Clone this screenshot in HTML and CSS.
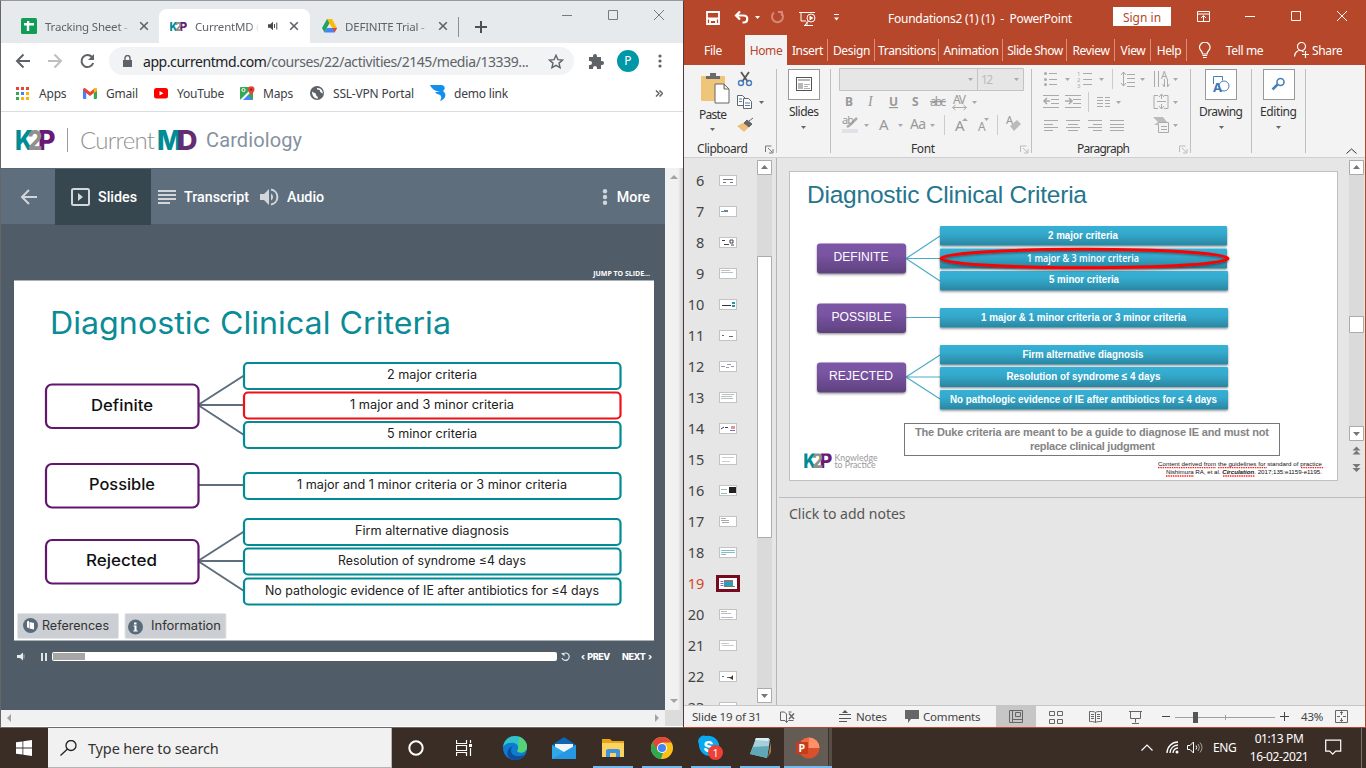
FILE: index.html
```html
<!DOCTYPE html>
<html lang="en">
<head>
<meta charset="utf-8">
<title>Desktop</title>
<link rel="stylesheet" href="styles.css">
</head>
<body>
<svg width="0" height="0" class="defs">
  <defs>
    <linearGradient id="teal" x1="0" y1="0" x2="0" y2="1"><stop offset="0" stop-color="#36b1d6"/><stop offset=".4" stop-color="#34a9cc"/><stop offset="1" stop-color="#2a86a1"/></linearGradient>
    <linearGradient id="purple" x1="0" y1="0" x2="0" y2="1"><stop offset="0" stop-color="#7d57a7"/><stop offset=".4" stop-color="#7853a1"/><stop offset="1" stop-color="#5d417d"/></linearGradient>
    <filter id="shade" x="-5%" y="-20%" width="110%" height="160%"><feDropShadow dx="0" dy="1.2" stdDeviation="1" flood-opacity=".45"/></filter>
    <symbol id="k2p" viewBox="0 0 39 20">
      <text x="-1" y="20" font-size="27.500" class="lg" fill="#008c95" textLength="18" lengthAdjust="spacingAndGlyphs">K</text>
      <text x="22" y="20" font-size="27.500" class="lg" fill="#6a1a74" textLength="17.500" lengthAdjust="spacingAndGlyphs">P</text>
      <text x="11.500" y="20" font-size="27.500" class="lg" fill="#8f9090" textLength="15" lengthAdjust="spacingAndGlyphs">2</text>
    </symbol>
    <symbol id="close" viewBox="0 0 10 10"><path d="M1.2 1.2l7.6 7.6M8.800 1.200L1.200 8.800" stroke="#5f6368" stroke-width="1.600" fill="none"/></symbol>
  </defs>
</svg>

<div class="desktop">
  <section class="chrome">
    <div class="tabstrip">
      <div class="tab t1">
        <svg width="16" height="16"><rect width="16" height="16" rx="1.500" fill="#0f9d58"/><path d="M3 5h10v2.400H8.200V13H5.800V7.400H3zM6 3h2.300v4H6z" fill="#fff"/></svg>
        <span class="tt">Tracking Sheet -</span>
        <svg class="x" width="10" height="10"><use href="#close"/></svg>
      </div>
      <div class="tab active t2">
        <svg width="17" height="9"><use href="#k2p" width="17" height="9"/></svg>
        <span class="tt">CurrentMD (</span>
        <svg class="snd" width="10" height="10"><path d="M0 3.200h2.200L5 .8v8.400L2.200 6.800H0z" fill="#45494d"/><path d="M6.500 3v4M8.800 1.500v7" stroke="#45494d"/></svg>
        <svg class="x" width="10" height="10"><use href="#close"/></svg>
      </div>
      <div class="tab t3">
        <svg width="15" height="14" viewBox="0 0 15 14"><path d="M5 0h5L5 8.700 2.500 13.500 0 9z" fill="#22a45d"/><path d="M5 0h5l5 9h-5z" fill="#fbbc05"/><path d="M4.800 9H15l-2.500 4.500h-10z" fill="#4285f4"/><path d="M12 9h3l-2.500 4.500L10.800 9z" fill="#ea4335"/><path d="M7.500 4.500L10 9H5z" fill="#e7eaed"/></svg>
        <span class="tt">DEFINITE Trial -</span>
        <svg class="x" width="10" height="10"><use href="#close"/></svg>
      </div>
      <svg class="plus" width="34" height="20"><path d="M2.500 0v20" stroke="#8d9093"/><path d="M25 4v12M19 10h12" stroke="#4d5155" stroke-width="2"/></svg>
      <svg class="winctl" width="104" height="12"><path d="M0 5.500h10M46.500 .5h9v9h-9zM92 0l10 10M102 0L92 10" fill="none" stroke="#777b7e"/></svg>
    </div>
    <div class="addr">
      <svg width="95" height="18" viewBox="0 0 95 18" fill="none" stroke="#5f6368" stroke-width="2"><path d="M15 9H3M8.500 2.500L2 9l6.500 6.500"/><path d="M33 9h12M39.500 2.500L46 9l-6.500 6.500" stroke="#bdbfc1"/><path d="M77 5a6 6 0 1 0 1.200 6"/><path d="M79 2v6h-6z" fill="#5f6368" stroke="none"/></svg>
      <div class="omni">
        <svg width="9" height="13"><path d="M0 5h9v7H0z" fill="#5f6368"/><path d="M2 6V3a2.500 2.500 0 0 1 5 0v3" fill="none" stroke="#5f6368" stroke-width="1.400"/></svg>
        <span><b>app.currentmd.com</b>/courses/22/activities/2145/media/13339...</span>
        <svg class="star" width="16" height="15" viewBox="0 0 16 15"><path d="M8 1.300l1.900 4.300 4.700.4-3.600 3.100 1.100 4.600L8 11.300l-4.100 2.400L5 9.100 1.400 6l4.700-.4z" fill="none" stroke="#5f6368" stroke-width="1.400"/></svg>
      </div>
      <svg class="puz" width="15" height="15" viewBox="0 0 15 15"><path d="M0 3h4V2a2 2 0 0 1 4 0v1h4v4h1a2 2 0 0 1 0 4h-1v4H8v-1a2 2 0 0 0-4 0v1H0v-4h1a2 2 0 0 0 0-4H0z" fill="#5f6368"/></svg>
      <div class="avatar">P</div>
      <svg width="4" height="14" fill="#5f6368"><circle cx="2" cy="2" r="1.600"/><circle cx="2" cy="7" r="1.600"/><circle cx="2" cy="12" r="1.600"/></svg>
    </div>
    <div class="marks">
      <span class="m m1"><svg width="13" height="13"><g fill="#ea4335"><path d="M0 0h3v3H0zM5 0h3v3H5zM10 0h3v3h-3z"/></g><path d="M0 5h3v3H0zM0 10h3v3H0z" fill="#34a853"/><path d="M5 5h3v3H5z" fill="#4285f4"/><path d="M10 5h3v3h-3zM5 10h3v3H5zM10 10h3v3h-3z" fill="#fbb200"/></svg>Apps</span>
      <span class="m m2"><svg width="14" height="11"><path d="M0 1.500h3.200V11H1a1 1 0 0 1-1-1z" fill="#4285f4"/><path d="M10.800 1.500H14V10a1 1 0 0 1-1 1h-2.200z" fill="#34a853"/><path d="M0 1.500A1.500 1.500 0 0 1 2.500.4L7 4l4.500-3.600A1.500 1.500 0 0 1 14 1.500v1L7 8 0 2.500z" fill="#ea4335"/><path d="M10.800 1l.7-.6A1.500 1.500 0 0 1 14 1.500V3l-3.200 2z" fill="#fbbc04"/></svg>Gmail</span>
      <span class="m m3"><svg width="14" height="12"><rect y="1" width="14" height="10.500" rx="2.500" fill="#f00"/><path d="M5.500 4v4.500l4-2.200z" fill="#fff"/></svg>YouTube</span>
      <span class="m m4"><svg width="15" height="14"><rect y="1" width="13" height="13" rx="1" fill="#34a853"/><path d="M7 8l6 6H1z" fill="#4285f4"/><path d="M0 14L12 2l1 2L3 14z" fill="#f5f5f5"/><circle cx="3.500" cy="4" r="1.600" fill="none" stroke="#fff"/><path d="M11 9.500C10 7 8 6 8 3.500a3 3 0 0 1 6.500 0C14.500 6 12 7 11 9.500z" fill="#ea4335"/><circle cx="11.200" cy="3.500" r="1.100" fill="#7b1d14"/></svg>Maps</span>
      <span class="m m5"><svg width="14" height="14"><circle cx="7" cy="7" r="7" fill="#5f6368"/><path d="M2 5.500c2 2 4 1 4 3s2 1 2 4c-3 .500-6-2-6-7zM7 2c0 3 3 1 3 3s2 1 2.500 3c1-3-1.500-6.500-5.500-6z" fill="#fff"/></svg>SSL-VPN Portal</span>
      <span class="m m6"><svg width="16" height="16"><path d="M0 0h11c4 0 5 4 2 6 4 3 3 8-3 10 2-4 2-6-3-7l-2-2h5C5 6 2 4 0 0z" fill="#1290ee"/></svg>demo link</span>
      <svg class="more" width="8" height="7"><path d="M1 .5l3 3-3 3M4.500 .5l3 3-3 3" fill="none" stroke="#5f6368" stroke-width="1.500"/></svg>
    </div>
    <div class="brand">
      <svg width="310" height="56" viewBox="1 112 310 56">
        <use href="#k2p" x="16" y="130" width="39" height="20"/>
        <path d="M67.500 128v24" stroke="#9a9a9a"/>
        <text class="la" x="80" y="149" font-size="24" fill="#8d9294" textLength="75">Current</text>
        <text class="lg" x="157" y="150" font-size="27.500" fill="#008c95" textLength="25" lengthAdjust="spacingAndGlyphs">M</text>
        <text class="lg" x="177" y="150" font-size="27.500" fill="#652d73" textLength="20.500" lengthAdjust="spacingAndGlyphs">D</text>
        <text class="ro" x="206" y="147" font-size="20" fill="#8492a0" textLength="96">Cardiology</text>
      </svg>
    </div>
    <div class="page">
      <div class="course">
        <nav class="cnav">
          <svg class="back" width="18" height="16"><path d="M17 8H2M9 1L2 8l7 7" fill="none" stroke="#d2d6da" stroke-width="2"/></svg>
          <span class="ci on"><svg width="19" height="18"><rect x="1" y="1" width="17" height="16" rx="1.500" fill="none" stroke="#d2d8da" stroke-width="2"/><path d="M7 5v8l5-4z" fill="#d2d8da"/></svg>Slides</span>
          <span class="ci c2"><svg width="18" height="14"><path d="M0 1h18M0 5h18M0 9h18M0 13h12" stroke="#d2d6da" stroke-width="2"/></svg>Transcript</span>
          <span class="ci c3"><svg width="19" height="18"><path d="M0 6h4l5-5v16l-5-5H0z" fill="#d2d6da"/><path d="M11 5.500a4 4 0 0 1 0 7z" fill="#d2d6da"/><path d="M11 1.500a7.600 7.600 0 0 1 0 15" fill="none" stroke="#d2d6da" stroke-width="2"/></svg>Audio</span>
          <span class="ci c4"><svg width="6" height="16" fill="#d2d6da"><circle cx="3" cy="2.300" r="2.200"/><circle cx="3" cy="8" r="2.200"/><circle cx="3" cy="13.700" r="2.200"/></svg>More</span>
        </nav>
        <div class="stage">
          <div class="jump">JUMP TO SLIDE...</div>
          <svg class="slide" width="640" height="361" viewBox="14 280 640 361">
            <path d="M14 280.500h640M14 640.500h640" stroke="#a9b0b6"/>
            <text class="po" x="50" y="334" font-size="30.500" fill="#0a8c97" textLength="401" lengthAdjust="spacingAndGlyphs">Diagnostic Clinical Criteria</text>
            <path d="M198 405l46-29.500M198 405h46M198 405l46 30M198 485h46M198 561l46-29.500M198 561h46M198 561l46 30" stroke="#5f6d7c" stroke-width="2" fill="none"/>
            <g fill="#fff" stroke="#62166e" stroke-width="2.200"><rect x="46" y="384.500" width="152.500" height="43.500" rx="6"/><rect x="46" y="464" width="152.500" height="43.500" rx="6"/><rect x="46" y="540" width="152.500" height="43.500" rx="6"/></g>
            <g fill="#fff" stroke="#008c95" stroke-width="2.200"><rect x="244" y="363" width="376.500" height="26" rx="4"/><rect x="244" y="422" width="376.500" height="26" rx="4"/><rect x="244" y="473" width="376.500" height="26" rx="4"/><rect x="244" y="519" width="376.500" height="26" rx="4"/><rect x="244" y="548.500" width="376.500" height="26" rx="4"/><rect x="244" y="578.500" width="376.500" height="26" rx="4"/></g>
            <rect x="244" y="392.500" width="376.500" height="26" rx="4" fill="#fff" stroke="#f01015" stroke-width="2.200"/>
            <g class="po" font-size="15.500" font-weight="500" fill="#111"><text x="91" y="411" textLength="62" lengthAdjust="spacingAndGlyphs">Definite</text><text x="89" y="490" textLength="66" lengthAdjust="spacingAndGlyphs">Possible</text><text x="86" y="566" textLength="71" lengthAdjust="spacingAndGlyphs">Rejected</text></g>
            <g class="po" font-size="12.500" fill="#222"><text x="387" y="379" textLength="90" lengthAdjust="spacingAndGlyphs">2 major criteria</text><text x="350" y="409" textLength="164" lengthAdjust="spacingAndGlyphs">1 major and 3 minor criteria</text><text x="387" y="438" textLength="90" lengthAdjust="spacingAndGlyphs">5 minor criteria</text><text x="297" y="489" textLength="270" lengthAdjust="spacingAndGlyphs">1 major and 1 minor criteria or 3 minor criteria</text><text x="355" y="535" textLength="154" lengthAdjust="spacingAndGlyphs">Firm alternative diagnosis</text><text x="338" y="565" textLength="188" lengthAdjust="spacingAndGlyphs">Resolution of syndrome ≤4 days</text><text x="265" y="595" textLength="334" lengthAdjust="spacingAndGlyphs">No pathologic evidence of IE after antibiotics for ≤4 days</text></g>
            <rect x="17" y="613" width="102" height="26" rx="2" fill="#e2e4e6"/><rect x="18" y="614" width="100" height="24" fill="#cbcfd4"/>
            <rect x="124.500" y="613" width="102" height="26" rx="2" fill="#e2e4e6"/><rect x="125.500" y="614" width="100" height="24" fill="#cbcfd4"/>
            <circle cx="30.500" cy="625.500" r="7.500" fill="#596a7b"/><path d="M27 621.500l2-.8v7.500l-2-1zM29.500 622l4.500 1v6.500l-4.500-1z" fill="#fff"/>
            <circle cx="135.500" cy="627" r="7.500" fill="#596a7b"/><path d="M134 622.500h2.500v2H134zM133.500 625.500h3v5h1.200v1h-4.400v-1h1.200v-4h-1z" fill="#fff"/>
            <g class="po" font-size="12.500" fill="#333"><text x="42" y="630" textLength="67" lengthAdjust="spacingAndGlyphs">References</text><text x="151" y="630" textLength="70" lengthAdjust="spacingAndGlyphs">Information</text></g>
          </svg>
          <div class="player">
            <svg class="vol" width="8" height="9"><path d="M0 3h3l3-2.500v8L3 6H0z" fill="#e8eaec"/><path d="M7 2.500v4" stroke="#a9b1b9"/></svg>
            <svg class="pz" width="8" height="8"><path d="M1 0v8M5 0v8" stroke="#dfe2e4" stroke-width="2"/></svg>
            <div class="bar"><i></i></div>
            <svg class="rp" width="9" height="9"><path d="M1.500 2.500A3.700 3.700 0 1 1 1 6" fill="none" stroke="#e4e6e8" stroke-width="1.200"/><path d="M0 1h3.500v3.500z" fill="#e4e6e8"/></svg>
            <span class="pv">‹ PREV</span><span class="nx">NEXT ›</span>
          </div>
        </div>
      </div>
      <div class="vs"><svg width="8" height="4"><path d="M0 4l4-4 4 4z" fill="#a3a3a3"/></svg><svg width="8" height="4"><path d="M0 0h8L4 4z" fill="#a3a3a3"/></svg></div>
    </div>
    <div class="hs"><svg width="4" height="8"><path d="M4 0v8L0 4z" fill="#a3a3a3"/></svg><svg class="hr" width="4" height="8"><path d="M0 0v8l4-4z" fill="#a3a3a3"/></svg><i></i></div>
  </section>

  <section class="ppt">
    <div class="title">
      <svg width="160" height="35" viewBox="684 0 160 35" fill="none" stroke="#fff">
        <path d="M707 12h12v12h-12zM707 18.500h12M710 24v-4h6v4" stroke-width="1.800"/>
        <path d="M740 11.500l-4 4 4 4M736.500 15.500h7c5 0 5 7 0 7h-1" stroke-width="2.200"/><path d="M755 16h5l-2.500 3z" fill="#fff" stroke="none"/>
        <path d="M774 12.500a5.500 5.500 0 1 0 7 0M782 16v-4h-4" stroke="#d58877" stroke-width="2"/>
        <path d="M799 12.500h16M801 12.500v8.500h5M805 25l3.500-4"/><circle cx="811" cy="18" r="4"/><path d="M809.500 15.500v5l4-2.500z" fill="#fff" stroke="none"/><path d="M807 21.500v4M804 25.500h9"/>
        <path d="M834 14.500h5"/><path d="M834 17.500h5l-2.500 3z" fill="#fff" stroke="none"/>
      </svg>
      <span class="name">Foundations2 (1) (1)&nbsp; -&nbsp; PowerPoint</span>
      <span class="sign">Sign in</span>
      <svg class="wc" width="152" height="12" fill="none" stroke="#fff"><path d="M.5 .5h12v10H.5zM.5 3h12M6.500 10V5M4 7l2.500-2.500L9 7"/><path d="M48 5.500h10M94.500 .5h9v9h-9zM140 0l10 10M150 0l-10 10"/></svg>
    </div>
    <div class="rtabs">
      <span class="r1">File</span><span class="r2">Home</span><span class="r3">Insert</span><span class="r4">Design</span><span class="r5">Transitions</span><span class="r6">Animation</span><span class="r7">Slide Show</span><span class="r8">Review</span><span class="r9">View</span><span class="r10">Help</span>
      <svg class="bulb" width="12" height="17" fill="none" stroke="#fff" stroke-width="1.200"><path d="M3.500 12c0-3-3-3.500-3-6.500a5.300 5.300 0 0 1 10.600 0c0 3-3 3.500-3 6.500zM3.500 13.500h4.600M4 15.500h3.600"/></svg>
      <span class="tell">Tell me</span>
      <svg class="pers" width="15" height="16" fill="none" stroke="#fff" stroke-width="1.200"><circle cx="7.500" cy="4.500" r="4"/><path d="M.6 14.500c0-4 3-6 5-6s3 .5 4 1.500M11.500 9v7M8 12.500h7"/></svg>
      <span class="share">Share</span>
    </div>
    <div class="ribbon">
      <svg class="grp" width="93" height="92" viewBox="684 65 93 92">
        <rect x="701" y="76" width="24" height="25" rx="1" fill="#efc579"/><path d="M706 79h14v-3h-4v-3h-6v3h-4z" fill="#6b6b6b"/><path d="M715 84h9l5 5v14h-14zM724 84v5h5" fill="#fff" stroke="#666"/>
        <text x="699" y="119" textLength="28">Paste</text><path d="M710 128h5l-2.500 3z"/>
        <path d="M741 72l7 10M749 72l-7 10" stroke="#555" stroke-width="1.800"/><g fill="none" stroke="#4a7ebb" stroke-width="1.400"><circle cx="741" cy="83" r="2.500"/><circle cx="749" cy="83" r="2.500"/></g>
        <g fill="#fff" stroke="#666"><path d="M737.500 95.500h5l3 3v7h-8z"/><path d="M743.500 98.500h5l3 3v7h-8z"/></g><path d="M739 99h3M739 101.500h3M745 103h5M745 105.500h5" stroke="#4a7ebb"/><path d="M759 101h5l-2.500 3z"/>
        <path d="M737 126l8-4 5 4-6 6z" fill="#eec079"/><path d="M744 123l5 4 3-3-5-4zM749 121l4-3" fill="#666" stroke="#666"/>
        <text x="697" y="153" textLength="51">Clipboard</text><path d="M765.500 152v-6h6M768 148l4 4M769 153h4v-4" fill="none" stroke="#777"/>
      </svg>
      <svg class="grp" width="54" height="92" viewBox="777 65 54 92">
        <rect x="788.500" y="69.500" width="31" height="30" fill="#fff" stroke="#999"/><rect x="796.500" y="77.500" width="15" height="13" fill="none" stroke="#555"/><path d="M798 79h12v2h-12zM798 83h5v6h-5z" fill="#b8b8b8"/><path d="M804 84.500h6M804 86.500h4M804 88.500h6" stroke="#b0b0b0"/>
        <text x="789" y="116" textLength="30">Slides</text><path d="M801 126h5l-2.500 3z"/>
      </svg>
      <svg class="grp dim" width="201" height="92" viewBox="831 65 201 92">
        <path d="M839.500 68.500h138v22h-138zM977.500 68.500h46v22h-46z" fill="#e6e6e6" stroke="#c3c3c3"/>
        <path d="M968 78h5l-2.500 3zM1014 78h5l-2.500 3z" fill="#aaa"/><text x="981" y="84" textLength="12" fill="#bbb">12</text>
        <g fill="#999"><text x="845" y="106" font-weight="bold" textLength="8">B</text><text x="868" y="106" font-style="italic" class="se" font-size="14">I</text><text x="889" y="106" textLength="8" font-weight="bold" text-decoration="underline">U</text><text x="912" y="106" font-weight="bold" textLength="8">S</text><text x="930" y="106" textLength="16" text-decoration="line-through">abc</text><text x="953" y="104" textLength="13">AV</text></g>
        <path d="M953 107.500h13M955.500 105l-3 2.500 3 2.500M963.500 105l3 2.500-3 2.500" fill="none" stroke="#aaa"/>
        <g fill="#aaa"><path d="M972 101h5l-2.500 3zM864 124h5l-2.500 3zM898 124h5l-2.500 3zM930 124h5l-2.500 3zM962 121l3-3 3 3zM984 118h5l-2.500 3z"/></g>
        <path d="M842 129h16v4h-16z" fill="#e5dfe8"/><path d="M847 127l3-2 7-7" stroke="#aaa" stroke-width="2.500" fill="none"/>
        <g fill="#999"><text x="842" y="124" font-size="11" textLength="12">ab</text><text x="879" y="130" font-size="15" textLength="10">A</text><text x="910" y="129" font-size="14" textLength="16">Aa</text><text x="955" y="131" font-size="15" textLength="10">A</text><text x="978" y="131" textLength="8">A</text><text x="1006" y="124" font-size="11">A</text></g>
        <path d="M944.500 115v20M997.500 115v20" stroke="#ccc"/><path d="M1010 126l7-6 4 4-7 7z" fill="#bbb"/>
        <text x="911" y="153" textLength="24">Font</text><path d="M1020.500 152v-6h6M1023 148l4 4M1024 153h4v-4" fill="none" stroke="#bbb"/>
      </svg>
      <svg class="grp" width="159" height="92" viewBox="1032 65 159 92">
        <g fill="none" stroke="#aaa"><path d="M1049 73.500h8M1049 79.500h8M1049 84.500h8M1083 73.500h9M1083 79.500h9M1083 84.500h9"/><path d="M1112.500 69v20M1088.500 92v20" stroke="#ccc"/><path d="M1123.500 72v14M1121 75l2.500-3 2.500 3M1121 83l2.500 3 2.500-3M1127 74.500h8M1127 78.500h8M1127 82.500h8M1127 86.500h8"/>
        <path d="M1154.500 71v16M1158.500 71v16M1164.500 79v8M1167.500 79v8M1162.500 84l2 3M1169.500 84l-2 3"/>
        <path d="M1043 95.500h16M1051 99.500h8M1051 103.500h8M1043 107.500h16M1065 95.500h16M1073 99.500h8M1073 103.500h8M1065 107.500h16"/><path d="M1050 101h-6M1047 98l-3 3 3 3M1065 101h7M1069 98l3 3-3 3" stroke-width="1.600"/>
        <path d="M1097 97.500h6M1097 100.500h6M1097 103.500h6M1097 106.500h6M1105 97.500h5M1105 100.500h5M1105 103.500h5M1105 106.500h5"/>
        <path d="M1158 95.500h-4v13h4M1164 95.500h4v13h-4M1161.500 94v5M1159 97l2.500-3 2.500 3M1161.500 104v5M1159 106l2.500 3 2.500-3M1157 101.500h9"/>
        <path d="M1044 120.500h14M1044 124.500h9M1044 127.500h14M1044 130.500h9M1066 120.500h14M1068 124.500h10M1066 127.500h14M1068 130.500h10M1088 120.500h14M1093 124.500h9M1088 127.500h14M1093 130.500h9M1110 120.500h14M1110 124.500h14M1110 127.500h14M1110 130.500h14"/>
        <path d="M1158.500 122.500h10v10h-10z" fill="#f2f2f2"/><path d="M1161 126.500h6M1161 129.500h6"/></g>
        <path d="M1153 117h10l4 5h-8v3h-5l4-3z" fill="#bbb"/>
        <g fill="#aaa"><circle cx="1045.500" cy="73.500" r="1.500"/><circle cx="1045.500" cy="79.500" r="1.500"/><circle cx="1045.500" cy="84.500" r="1.500"/><text x="1077" y="76" font-size="6">1</text><text x="1077" y="82" font-size="6">2</text><text x="1077" y="88" font-size="6">3</text><text x="1161" y="79" font-size="10">A</text>
        <path d="M1065 78h5l-2.500 3zM1099 78h5l-2.500 3zM1140 78h5l-2.500 3zM1173 78h5l-2.500 3zM1116 101h5l-2.500 3zM1173 101h5l-2.500 3zM1173 124h5l-2.500 3z"/></g>
        <text x="1077" y="153" textLength="53">Paragraph</text><path d="M1179.500 152v-6h6M1182 148l4 4M1183 153h4v-4" fill="none" stroke="#bbb"/>
      </svg>
      <svg class="grp" width="61" height="92" viewBox="1191 65 61 92">
        <rect x="1205.500" y="69.500" width="31" height="30" fill="#fff" stroke="#999"/><path d="M1213.500 84v-7.500h9v4" fill="none" stroke="#4a7ebb"/><circle cx="1224" cy="86" r="5" fill="none" stroke="#4a7ebb"/><text x="1213" y="92" font-size="13" font-weight="bold" fill="#3e78b8">A</text>
        <text x="1199" y="116" textLength="44">Drawing</text><path d="M1219 126h5l-2.500 3z"/>
      </svg>
      <svg class="grp" width="54" height="92" viewBox="1252 65 54 92">
        <rect x="1263.500" y="69.500" width="31" height="30" fill="#fff" stroke="#999"/><circle cx="1280.500" cy="82" r="3.500" fill="none" stroke="#4a7ebb" stroke-width="1.600"/><path d="M1277.500 84.500l-5 5" stroke="#4a7ebb" stroke-width="2.500"/>
        <text x="1260" y="116" textLength="37">Editing</text><path d="M1276 126h5l-2.500 3z"/>
      </svg>
      <svg class="coll" width="11" height="6"><path d="M.5 5.500l5-4.500 5 4.500" fill="none" stroke="#333"/></svg>
    </div>
    <div class="work">
      <div class="thumbs">
        <div class="th"><span>6</span><svg width="18" height="11"><path d="M4 4.500h10M4 7.500h3M11 7.500h3" stroke="#778" /></svg></div>
        <div class="th"><span>7</span><svg width="18" height="11"><path d="M2 5.500h7M5 4.500h4" stroke="#689"/></svg></div>
        <div class="th"><span>8</span><svg width="18" height="11"><path d="M3 3.500h3M5 7.500h5M11 3h3v3h-3zM12 8h3" stroke="#445" fill="none"/></svg></div>
        <div class="th"><span>9</span><svg width="18" height="11"><path d="M2 2.500h9M2 4.500h12" stroke="#b4c2cc"/></svg></div>
        <div class="th"><span>10</span><svg width="18" height="11"><path d="M3 6.500h9" stroke="#334"/><path d="M13 3h3v2h-3zM13 6h3v2h-3z" fill="#2795a5"/></svg></div>
        <div class="th"><span>11</span><svg width="18" height="11"><path d="M3 5.500h2M10 6.500h4" stroke="#668"/></svg></div>
        <div class="th"><span>12</span><svg width="18" height="11"><path d="M2 5.500h4M8 3.500h4M7 6.500h3M12 5.500h3" stroke="#99a"/></svg></div>
        <div class="th"><span>13</span><svg width="18" height="11"><path d="M3 2.500h12M2 4.500h11M2 6.500h12" stroke="#b4c2c2"/></svg></div>
        <div class="th"><span>14</span><svg width="18" height="11"><path d="M2 6l3-2M6 4.500h3" stroke="#446"/><path d="M12 3h4v3h-4z" fill="#d99"/><path d="M11 7.500h5" stroke="#86b"/></svg></div>
        <div class="th"><span>15</span><svg width="18" height="11"><path d="M3 3.500h12M3 7.500h8" stroke="#ccd2c8"/></svg></div>
        <div class="th"><span>16</span><svg width="18" height="11"><path d="M2 4.500h6M2 8.500h6" stroke="#9bb"/><path d="M10 2h7v6h-7z" fill="#222"/></svg></div>
        <div class="th"><span>17</span><svg width="18" height="11"><path d="M2 2.500h5M2 4.500h8M3 6.500h7" stroke="#aaa"/></svg></div>
        <div class="th"><span>18</span><svg width="18" height="11"><path d="M2 3.500h14M2 5.500h14M2 7.500h5" stroke="#8bc"/></svg></div>
        <div class="th sel"><span>19</span><svg width="18" height="11"><path d="M5 3h9v5H5z" fill="#2d9db8"/><path d="M5 2.500h9" stroke="#d55"/><path d="M1.500 3.500h3M1.500 5.500h3M1.500 7.500h3" stroke="#86b"/><path d="M5 8.500h11" stroke="#777"/></svg></div>
        <div class="th"><span>20</span><svg width="18" height="11"><path d="M2 2.500h6M2 4.500h10M2 8.500h12" stroke="#bbc"/></svg></div>
        <div class="th"><span>21</span><svg width="18" height="11"><path d="M2 3.500h8M3 5.500h12" stroke="#c4cccc"/></svg></div>
        <div class="th"><span>22</span><svg width="18" height="11"><path d="M3 5.500h2M8 6.500h4" stroke="#47a"/><path d="M9 6h3l2-2v5z" fill="#532"/></svg></div>
        <div class="th"><span>23</span><svg width="18" height="11"></svg></div>
      </div>
      <svg class="tsb" width="16" height="544" viewBox="757 160 16 544"><path d="M757 160h15v543h-15z" fill="#dadada"/><g fill="#fff" stroke="#ababab"><path d="M757.500 160.500h14v14h-14zM757.500 256.500h14v281h-14zM757.500 688.500h14v14h-14z"/></g><path d="M761 169l3.500-4 3.500 4zM761 694h7l-3.500 4z" fill="#777"/></svg>
      <div class="main">
        <div class="canvas">
          <svg class="deck" width="550" height="311" viewBox="789 171 550 311">
            <rect x="789.500" y="171.500" width="548" height="309" fill="#fff" stroke="#c0c0c0"/>
            <text class="ar" x="807" y="203" font-size="24.500" fill="#25758e" textLength="280">Diagnostic Clinical Criteria</text>
            <path d="M906 258.500l34-22.500M906 258.500h34M906 258.500l34 22.500M906 317.500h34M906 377l34-22M906 377h34M906 377l34 22" stroke="#4bacc6" stroke-width="1.200" fill="none"/>
            <g fill="url(#purple)" filter="url(#shade)"><rect x="817" y="243.500" width="89" height="30" rx="3"/><rect x="817" y="303.500" width="89" height="29.500" rx="3"/><rect x="817" y="362.500" width="89" height="30" rx="3"/></g>
            <g fill="url(#teal)" filter="url(#shade)"><rect x="940" y="226" width="287" height="19.500" rx="1"/><rect x="940" y="248.500" width="287" height="20" rx="1"/><rect x="940" y="271" width="288" height="19.500" rx="1"/><rect x="940" y="308" width="288" height="19.500" rx="1"/><rect x="940" y="345" width="288" height="19.500" rx="1"/><rect x="940" y="367" width="288" height="20" rx="1"/><rect x="940" y="390" width="288" height="19.500" rx="1"/></g>
            <ellipse cx="1084.500" cy="258.500" rx="143.500" ry="9.200" fill="none" stroke="#fe0000" stroke-width="3" filter="url(#shade)"/>
            <g class="ar" font-size="12.500" fill="#fff"><text x="833.500" y="261" textLength="55" lengthAdjust="spacingAndGlyphs">DEFINITE</text><text x="831.500" y="321" textLength="60" lengthAdjust="spacingAndGlyphs">POSSIBLE</text><text x="829" y="380" textLength="64" lengthAdjust="spacingAndGlyphs">REJECTED</text></g>
            <g class="ar" font-size="10.600" font-weight="bold" fill="#fff"><text x="1048" y="239" textLength="70" lengthAdjust="spacingAndGlyphs">2 major criteria</text><text class="os" x="1027" y="262" font-weight="600" textLength="112" lengthAdjust="spacingAndGlyphs">1 major &amp; 3 minor criteria</text><text x="1049" y="283" textLength="70" lengthAdjust="spacingAndGlyphs">5 minor criteria</text><text x="981" y="321" textLength="205" lengthAdjust="spacingAndGlyphs">1 major &amp; 1 minor criteria or 3 minor criteria</text><text x="1022.500" y="358" textLength="121" lengthAdjust="spacingAndGlyphs">Firm alternative diagnosis</text><text x="1006.500" y="380" textLength="154" lengthAdjust="spacingAndGlyphs">Resolution of syndrome ≤ 4 days</text><text x="950" y="403" textLength="267" lengthAdjust="spacingAndGlyphs">No pathologic evidence of IE after antibiotics for ≤ 4 days</text></g>
            <rect x="904.500" y="423.500" width="375" height="32" fill="#fff" stroke="#777"/>
            <g class="ar" font-size="11" font-weight="bold" fill="#848484"><text x="915" y="436" textLength="354">The Duke criteria are meant to be a guide to diagnose IE and must not</text><text x="1030" y="450" textLength="125">replace clinical judgment</text></g>
            <use href="#k2p" x="804" y="453.500" width="28" height="14.500"/>
            <g class="la kp" font-size="9.500" fill="#999"><text x="834.500" y="460.500" textLength="43" lengthAdjust="spacingAndGlyphs">Knowledge</text><text x="834.500" y="468" textLength="41" lengthAdjust="spacingAndGlyphs">to Practice</text></g>
            <g class="ar" font-size="6.200" fill="#111"><text x="1158" y="466" textLength="164">Content derived from the guidelines for standard of practice</text><text x="1166" y="474" textLength="156">Nishimura RA, et al. <tspan font-style="italic" font-weight="bold">Circulation</tspan>. 2017;135:e1159-e1195.</text></g>
            <path d="M1158 467.700h58M1218 467.700h49M1301 467.700h23M1166 476h28M1223 476h32" stroke="#f22" stroke-width="1.300" stroke-dasharray="1.500 .8"/>
          </svg>
          <svg class="msb" width="16" height="321" viewBox="1349 160 16 321"><path d="M1349 160h15v280h-15z" fill="#dadada"/><g fill="#fff" stroke="#ababab"><path d="M1349.500 160.500h14v14h-14zM1349.500 316.500h14v16h-14zM1349.500 426.500h14v14h-14z"/></g><path d="M1353 169l3.500-4 3.500 4zM1353 432h7l-3.500 4zM1352.500 450.500l4-4 4 4zM1352.500 454.500l4-4 4 4zM1352.500 464h8l-4 4zM1352.500 468h8l-4 4z" fill="#777"/></svg>
        </div>
        <div class="notes">Click to add notes</div>
      </div>
    </div>
    <div class="status">
      <span class="s1">Slide 19 of 31</span>
      <svg class="bk" width="15" height="12" fill="none" stroke="#666"><path d="M6.500 11.500L5 9.500H.5v-8.500h4l2 2v8.500l2-2h5M8.500 1h3"/><path d="M9 2.500l5 5.500M14 2.500L9 8" stroke-width="1.500"/></svg>
      <svg class="ni" width="12" height="13"><path d="M0 4.500h12M0 8.500h12M0 11.500h8" stroke="#555"/><path d="M3 3l3-3 3 3z" fill="#555"/></svg><span class="s2">Notes</span>
      <svg class="cm" width="14" height="13"><path d="M0 0h14v9H6l-3 4V9H0z" fill="#666"/></svg><span class="s3">Comments</span>
      <span class="norm"><svg width="14" height="13" fill="none" stroke="#666"><path d="M.5 .5h13v12H.5zM3.500 .5v12M3.500 9.500h10M6.500 2.500h5v4h-5z"/></svg></span>
      <svg class="vw" width="100" height="14" fill="none" stroke="#666"><path d="M.5 1.500h5v4h-5zM8.500 1.500h5v4h-5zM.5 9.500h5v4h-5zM8.500 9.500h5v4h-5z"/><path d="M46.500 12.500c-1-1-5-1-6-1v-10c3 0 5 0 6 1 1-1 3-1 6-1v10c-1 0-5 0-6 1zM46.500 2.500v10M42 4.500h3M42 6.500h3M42 8.500h3M48 4.500h3M48 6.500h3M48 8.500h3"/><path d="M80 1.500h13M81.500 2v6.500h10V2M86.500 8.500v4M83 13.500h7"/></svg>
      <svg class="zm" width="127" height="12"><path d="M0 5.500h8M118 5.500h9M122.500 1v9" stroke="#444"/><path d="M13 6.500h100M63.500 4v5" stroke="#a0a0a0"/><path d="M31 1h5v11h-5z" fill="#555"/></svg>
      <span class="pc">43%</span>
      <svg width="13" height="13" fill="none" stroke="#666"><path d="M.5 .5h12v12H.5zM6.500 2v3M6.500 8v3M2 6.500h3M8 6.500h3M5 3l1.500-1.500L8 3M5 10l1.500 1.500L8 10"/></svg>
    </div>
  </section>
</div>

<footer class="task">
  <div class="start"><svg width="16" height="16" fill="#fff"><path d="M0 2.300L6.500 1.400v6.100H0zM7.300 1.300L16 0v7.500H7.300zM0 8.400h6.500v6.200L0 13.700zM7.300 8.400H16V16l-8.700-1.200z"/></svg></div>
  <div class="search"><svg width="17" height="16" fill="none" stroke="#222" stroke-width="1.300"><circle cx="11" cy="5.500" r="5"/><path d="M7.500 9L.5 15.500"/></svg><span>Type here to search</span></div>
  <div class="ic w48"><svg width="16" height="16"><circle cx="8" cy="8" r="6.700" fill="none" stroke="#fff" stroke-width="2"/></svg></div>
  <div class="ic w48"><svg width="17" height="16" fill="none" stroke="#fff"><path d="M.5 0v3.500h10V0M.5 16v-3.500h10V16M.5 5.500h10v5H.5zM14.500 0v3M14.500 8v8" stroke-width="1.200"/><path d="M13 4h3v3h-3z" fill="#fff" stroke="none"/></svg></div>
  <div class="ic gap"><svg width="24" height="24" viewBox="0 0 24 24"><circle cx="12" cy="12" r="12" fill="#0c7bd0"/><path d="M0 11C1 4 6 0 12 0c7 0 12 5 12 10.500 0 4-3 6-6 6-3.500 0-4.500-1.500-3-3 1-2 0-5.500-4-6.500C6 6 2 8 0 11z" fill="#33c2c9"/><path d="M16 1c5 2 8 6 8 9.500 0 4-3 6-6 6-3.500 0-4.500-1.500-3-3z" fill="#54d476"/><path d="M8 13c-1 6 5 9 13 6-3 5-9 6-13 4C2 19 4 12 10 10c-1 1-2 2-2 3z" fill="#0d4d9a"/></svg></div>
  <div class="ic"><svg width="24" height="22"><path d="M0 8L12 0l12 8v14H0z" fill="#0f64b4"/><path d="M3 7h18v8H3z" fill="#f2f5f8"/><path d="M0 8l12 7 12-7v14H0z" fill="#2fa9ea"/><path d="M0 22L24 8v14z" fill="#1f8ddd" opacity=".6"/></svg></div>
  <div class="ic run"><svg width="22" height="18"><path d="M0 0h8l2 2h12v16H0z" fill="#e8a414"/><path d="M0 4h22v14H0z" fill="#fdd35f"/><path d="M4 18v-7l2-1h10l2 1v7h-4v-4H8v4z" fill="#3d93dd"/></svg></div>
  <div class="ic run"><svg width="22" height="22"><circle cx="11" cy="11" r="11" fill="#fbc116"/><path d="M1.500 5.500A11 11 0 0 1 20.500 5.500H11L6.500 14z" fill="#e0473a"/><path d="M1.500 5.500L7 14l5 2-2 6A11 11 0 0 1 1.500 5.500z" fill="#2da94f"/><circle cx="11" cy="11" r="5" fill="#fff"/><circle cx="11" cy="11" r="4" fill="#4285f4"/></svg></div>
  <div class="ic run"><svg width="26" height="25" viewBox="0 0 26 25"><path d="M0 6a6 6 0 0 1 8-5 11 11 0 0 1 13 13 7 7 0 0 1-9 7A11 11 0 0 1 1 10z" fill="#08a9ee"/><text x="5.500" y="17" class="lg" font-size="15" fill="#fff">S</text><circle cx="17.500" cy="17.500" r="7.500" fill="#ef4036"/><text x="14.500" y="21.500" class="ss" font-size="11" fill="#fff">1</text></svg></div>
  <div class="ic run"><svg width="24" height="22"><path d="M8 1l14 1-3 19L2 17z" fill="#a5cfd9"/><path d="M5 10l16-1-2 12L2 17z" fill="#5fa8b8"/><path d="M8 1h13l-1 3-13-1z" fill="#dceef2"/><path d="M20 20l3-15v10z" fill="#a8824b"/></svg></div>
  <div class="ic cur"><svg width="25" height="22"><circle cx="14" cy="11" r="10.500" fill="#d9512c"/><path d="M14 .5A10.500 10.500 0 0 1 24.500 11H14z" fill="#ff9068"/><path d="M3.500 11A10.500 10.500 0 0 1 14 .5V11z" fill="#ed6c47"/><rect x="1" y="5" width="12" height="12" rx="1" fill="#c43e1c"/><text x="3.500" y="15" class="ss" font-size="10.500" font-weight="bold" fill="#fff">P</text></svg></div>
  <div class="tray">
    <svg width="12" height="7"><path d="M.5 6.500L6 1l5.500 5.500" fill="none" stroke="#fff" stroke-width="1.200"/></svg>
    <svg class="wf" width="14" height="13" fill="none" stroke="#fff"><path d="M1 12A11 11 0 0 1 12 1M4 12a8 8 0 0 1 8-8M7 12a5 5 0 0 1 5-5" stroke-width="1.300"/><circle cx="11" cy="11" r="1.500" fill="#fff" stroke="none"/></svg>
    <svg class="sp" width="16" height="13" fill="none" stroke="#fff"><path d="M.5 4.500H3l3.500-3.500v11L3 8.500H.5z"/><path d="M9 4.500q1.500 2 0 4"/><path d="M11 3q3 3.500 0 7M13 1.500q4 5 0 10" stroke="#a79f9a"/></svg>
    <span class="eng">ENG</span>
    <div class="clock"><span>01:13 PM</span><span>16-02-2021</span></div>
    <svg class="nt" width="17" height="17"><path d="M.7 1.200h15v11h-5l-3 3-3-3h-4z" fill="none" stroke="#fff" stroke-width="1.200"/></svg>
  </div>
</footer>
</body>
</html>
```
FILE: styles.css
```css
* { box-sizing: border-box; }
body { margin: 0; width: 1366px; height: 768px; overflow: hidden; font-family: "Noto Sans", "Open Sans", sans-serif; font-size: 12px; color: #222; }
svg { display: block; flex: none; }
span { white-space: nowrap; }
.defs { position: absolute; }
.lg { font-family: Inter, sans-serif; font-weight: 800; }
.la { font-family: Lato, sans-serif; font-weight: 300; }
.kp { font-weight: 400; }
.ro { font-family: Roboto, sans-serif; }
.po { font-family: Inter, sans-serif; }
.ar { font-family: "Liberation Sans", Arial, sans-serif; }
.os, .ss { font-family: "Open Sans", sans-serif; }
.se { font-family: "Liberation Serif", serif; }
.desktop { display: grid; grid-template-columns: 684px 682px; grid-template-rows: 728px; height: 727px; }

/* browser window */
.chrome { height: 728px; border-top: 1px solid #97989c; border-left: 1px solid #666; border-right: 1px solid #4b3a36; border-bottom: 1px solid #6c6c6c; background: #fff; display: flex; flex-direction: column; overflow: hidden; }
.tabstrip { height: 42px; background: #e7eaed; display: flex; align-items: flex-start; }
.tab { height: 34px; margin-top: 8px; display: flex; align-items: center; color: #5f6368; font-size: 11.5px; letter-spacing: -.2px; }
.tab .x { margin-left: auto; }
.tt { overflow: hidden; -webkit-mask-image: linear-gradient(90deg, #000 85%, transparent); }
.t1 { width: 158px; padding: 0 10px 0 20px; }
.t1 .tt { margin-left: 8px; width: 87px; }
.t2 { width: 151px; padding: 0 11px 0 11px; }
.active { background: #fff; border-radius: 8px 8px 0 0; }
.t2 .tt { margin-left: 8px; width: 64px; }
.snd { margin-left: 9px; }
.t3 { width: 138px; padding: 0 0 0 12px; }
.t3 .tt { margin-left: 8px; width: 86px; }
.plus { margin: 16px 0 0 8px; }
.winctl { margin: 9px 0 0 72px; }
.addr { height: 36px; display: flex; align-items: center; padding-left: 14px; }
.addr > svg:first-child { margin-right: -1px; }
.omni { width: 465px; height: 28px; border-radius: 14px; background: #f1f3f4; display: flex; align-items: center; padding: 0 10px 0 14px; margin-right: 1px; color: #5f6368; font-size: 14px; letter-spacing: -.43px; }
.omni span { margin-left: 11px; }
.omni b { font-weight: 400; color: #202124; }
.star { margin-left: auto; }
.puz { margin-left: 14px; }
.avatar { width: 22px; height: 22px; margin: 0 19px 0 13px; border-radius: 50%; background: #0097a7; color: #fff; text-align: center; line-height: 22px; font-size: 12px; }
.marks { height: 33px; border-bottom: 1px solid #dadce0; display: flex; align-items: center; padding: 0 0 4px 15px; color: #3c4043; font-size: 12px; letter-spacing: -.2px; }
.m { display: flex; align-items: center; gap: 10px; }
.m1 { width: 67px; } .m2 { width: 71px; gap: 9px; } .m3 { width: 86px; gap: 9px; } .m4 { width: 70px; gap: 8px; } .m5 { width: 120px; gap: 9px; } .m6 { gap: 8px; }
.more { margin: 0 20px 0 auto; }
.brand { height: 56px; }
.page { display: flex; height: 542px; }
.course { width: 664px; }
.cnav { height: 56px; background: #5f6e7d; border-top: 1px solid #596775; display: flex; align-items: center; color: #fff; font: 500 14.3px Roboto, sans-serif; padding-left: 19px; }
.ci { display: flex; align-items: center; gap: 8px; height: 56px; }
.ci.on { background: #37474f; width: 96px; padding-left: 16px; margin-left: 17px; }
.c2 { margin-left: 7px; width: 102px; gap: 8px; }
.c3 { width: 100px; }
.c4 { margin-left: auto; padding-right: 15px; gap: 9px; }
.stage { height: 486px; background: #505c68; padding-left: 13px; }
.jump { height: 56px; width: 636px; text-align: right; padding-top: 45px; color: #fff; font: 700 7px/9px "Open Sans", sans-serif; letter-spacing: -.02px; }
.slide { background: #fff; }
.player { height: 31px; display: flex; align-items: center; padding-left: 3px; color: #fff; font: 800 9px Inter, sans-serif; letter-spacing: -.4px; word-spacing: 1px; }
.pz { margin-left: 16px; }
.bar { width: 505px; height: 9px; margin-left: 3px; background: #fff; border-radius: 2px; padding: 1px; }
.bar i { display: block; width: 32px; height: 7px; background: #a6a6a6; }
.rp { margin-left: 4px; }
.pv { margin-left: 11px; width: 41px; }
.vs { width: 18px; background: linear-gradient(90deg, #f1f1f1 13px, #cfcfcf); padding: 7px 5px; display: flex; flex-direction: column; justify-content: space-between; }
.hs { height: 16px; background: #f1f1f1; display: flex; align-items: center; padding-left: 6px; }
.hr { margin-left: auto; }
.hs i { width: 18px; height: 16px; background: #dcdcdc; margin-left: 6px; }

/* presentation window */
.ppt { height: 728px; background: #e6e6e6; border-right: 1px solid #b7472a; border-bottom: 1px solid #b7472a; display: flex; flex-direction: column; overflow: hidden; }
.title { height: 35px; background: #b7472a; color: #fff; display: flex; }
.name { margin: 10px 0 0 44px; width: 225px; font-size: 12px; letter-spacing: -.25px; }
.sign { width: 58px; height: 19px; margin-top: 7px; background: #fff; color: #b7472a; text-align: center; line-height: 21px; font-size: 12px; }
.wc { margin: 11px 0 0 26px; }
.rtabs { height: 30px; background: #b7472a; color: #fff; display: flex; align-items: center; letter-spacing: -.35px; }
.rtabs > span { height: 30px; line-height: 31px; text-align: center; overflow: hidden; }
.r1 { width: 61px; padding-right: 3px; }
.r2 { width: 42px; background: #f3f3f3; color: #b7472a; }
.r3, .r4, .r5, .r6, .r7, .r8, .r9, .r10 { background: linear-gradient(#d98f7d, #d98f7d) right 4px / 1px 22px no-repeat; }
.r3 { width: 41px; } .r4 { width: 47px; } .r5 { width: 64px; } .r6 { width: 64px; } .r7 { width: 64px; } .r8 { width: 48px; } .r9 { width: 36px; } .r10 { width: 36px; }
.r7 { padding: 0 2px; letter-spacing: -.5px; }
.bulb { margin-left: 12px; }
.tell { margin-left: 13px; width: 41px; }
.pers { margin-left: 29px; }
.share { margin-left: 3px; }
.ribbon { height: 93px; background: #f3f3f3; border-bottom: 1px solid #d0d0d0; display: flex; }
.grp { background: linear-gradient(#c0c0c0, #c0c0c0) right 4px / 1px 84px no-repeat; fill: #666; font-size: 12px; }
.grp text:not([fill]) { fill: #333; }
.grp g text:not([fill]) { fill: inherit; }
.coll { margin: 83px 0 0 40px; }
.work { height: 547px; display: flex; overflow: hidden; }
.thumbs { width: 73px; padding-top: 7px; height: 547px; overflow: hidden; }
.th { height: 31px; display: flex; align-items: center; color: #444; font-size: 14.5px; letter-spacing: -.2px; }
.th span { width: 20px; text-align: right; margin-top: -2px; }
.th svg { margin-left: 15px; background: #fff; outline: 1px solid #c3c3c3; outline-offset: -1px; }
.sel { color: #d24726; }
.th.sel svg { outline: 3px solid #750b1c; outline-offset: 0; }
.tsb { margin-top: 2px; }
.main { margin-left: 3px; width: 589px; border-left: 1px solid #b5b5b5; padding-left: 2px; }
.canvas { height: 340px; border-bottom: 1px solid #bdbdbd; display: flex; padding-left: 10px; }
.deck { margin-top: 13px; }
.msb { margin: 2px 0 0 10px; }
.notes { color: #555; font-size: 14px; padding: 6px 0 0 10px; }
.status { height: 22px; background: #f3f3f3; border-top: 1px solid #c6c6c6; display: flex; align-items: center; color: #444; font-size: 11.5px; letter-spacing: -.2px; }
.s1 { margin-left: 8px; width: 70px; }
.bk { margin-left: 18px; }
.ni { margin-left: 44px; }
.s2 { margin-left: 5px; width: 30px; }
.cm { margin-left: 19px; }
.s3 { margin-left: 4px; width: 54px; }
.norm { margin-left: 19px; width: 40px; height: 21px; background: #c6c6c6; padding: 4px 0 0 13px; }
.vw { margin-left: 13px; }
.zm { margin-left: 13px; }
.pc { margin-left: 12px; width: 34px; }

/* taskbar */
.task { height: 41px; background: #3a2d26; display: flex; color: #fff; clip-path: inset(1px 0 0 0); }
.start { width: 48px; padding: 13px 0 0 16px; }
.search { width: 344px; background: #f1f1f1; border: 1px solid #b9b4b1; border-left: 0; display: flex; align-items: center; padding-left: 12px; font-size: 14.5px; letter-spacing: -.15px; color: #333; }
.search span { margin-left: 11px; }
.ic { width: 49px; display: flex; align-items: center; justify-content: center; }
.w48 { width: 48px; }
.gap { margin-left: 2px; }
.run { background: linear-gradient(#76b9ed, #76b9ed) center bottom / 40px 2px no-repeat; }
.cur { width: 48px; background: linear-gradient(#76b9ed, #76b9ed) bottom / 48px 2px no-repeat, linear-gradient(90deg, #655b55 44px, #3d322c 44px 45px, #574d47 45px); padding-right: 1px; }
.tray { margin-left: auto; width: 225px; display: flex; align-items: center; background: linear-gradient(#7c736d, #7c736d) 220px 0 / 1px 41px no-repeat; }
.wf { margin-left: 13px; }
.sp { margin-left: 7px; }
.eng { margin-left: 10px; width: 24px; font-size: 12px; letter-spacing: -.4px; }
.clock { margin-left: 6px; width: 72px; display: flex; flex-direction: column; align-items: center; line-height: 18px; letter-spacing: -.4px; }
.nt { margin-left: 10px; }
```
